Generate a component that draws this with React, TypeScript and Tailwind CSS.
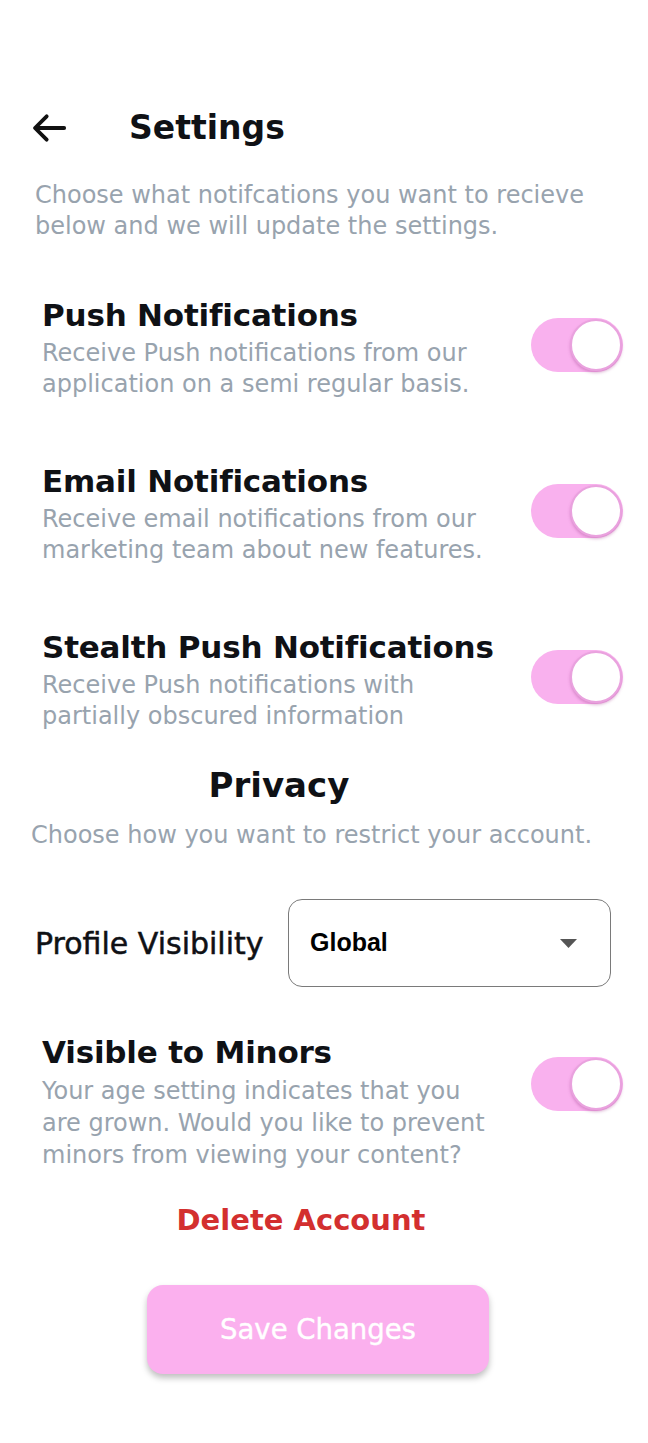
import { useState } from 'react';

const font = { fontFamily: '"DejaVu Sans", Verdana, sans-serif' };

function Toggle({ on, onChange, offset }: { on: boolean; onChange: () => void; offset: string }) {
  return (
    <button
      onClick={onChange}
      className={`flex h-[54px] w-[92px] shrink-0 items-center rounded-full p-[1px] ${offset} ${on ? 'justify-end bg-[#f9b1ee]' : 'justify-start bg-[#e5e7eb]'}`}
    >
      <span className="h-[52px] w-[52px] rounded-full border-2 border-[#e9a2de] bg-white shadow-[0_2px_3px_rgba(160,60,140,0.35)]" />
    </button>
  );
}

function SettingRow({
  title,
  desc,
  on,
  onChange,
  lh = 'leading-[31px]',
  offset = 'mt-[22px]',
}: {
  title: string;
  desc: string;
  on: boolean;
  onChange: () => void;
  lh?: string;
  offset?: string;
}) {
  return (
    <div className="flex items-start justify-between pl-[42px] pr-[25px]">
      <div className="w-[456px]">
        <h3 className="whitespace-nowrap text-[31px] leading-[38px] font-bold tracking-[-0.2px] text-[#0f1115]">{title}</h3>
        <p className={`mt-[4px] text-[24px] text-[#98a3ae] ${lh}`}>{desc}</p>
      </div>
      <Toggle on={on} onChange={onChange} offset={offset} />
    </div>
  );
}

export default function App() {
  const [push, setPush] = useState(true);
  const [email, setEmail] = useState(true);
  const [stealth, setStealth] = useState(true);
  const [minors, setMinors] = useState(true);

  return (
    <div className="min-h-[1443px] w-[648px] bg-white pt-[105px] pb-[68px]" style={font}>
      <div className="flex h-[46px] items-center pl-[30px]">
        <svg width="40" height="40" viewBox="0 0 24 24" fill="none" stroke="#111" strokeWidth="2.3" strokeLinecap="round" strokeLinejoin="round">
          <path d="M20.5 12H4" />
          <path d="M10 5l-7 7 7 7" />
        </svg>
        <h1 className="ml-[59px] text-[33px] font-bold text-[#0f1115]">Settings</h1>
      </div>

      <p className="mt-[29px] px-[35px] text-[24px] leading-[31px] text-[#98a3ae]">
        Choose what notifcations you want to recieve below and we will update the settings.
      </p>

      <div className="mt-[54px] flex flex-col gap-[62px]">
        <SettingRow
          title="Push Notifications"
          desc="Receive Push notifications from our application on a semi regular basis."
          on={push}
          onChange={() => setPush(!push)}
        />
        <SettingRow
          title="Email Notifications"
          desc="Receive email notifications from our marketing team about new features."
          on={email}
          onChange={() => setEmail(!email)}
        />
        <SettingRow
          title="Stealth Push Notifications"
          desc="Receive Push notifications with partially obscured information"
          on={stealth}
          onChange={() => setStealth(!stealth)}
        />
      </div>

      <h2 className="mt-[31px] pr-[90px] text-center text-[34px] leading-[44px] font-bold text-[#0f1115]">Privacy</h2>
      <p className="mt-[13px] pl-[31px] text-[24px] leading-[31px] text-[#98a3ae]">
        Choose how you want to restrict your account.
      </p>

      <div className="mt-[48px] flex items-center pl-[35px]">
        <span className="w-[253px] text-[30px] text-[#0f1115] [-webkit-text-stroke:0.5px_#0f1115]">Profile Visibility</span>
        <div className="flex h-[88px] w-[323px] items-center justify-between rounded-[14px] border border-[#7a7a7a] pl-[21px] pr-[33px]">
          <span className="text-[25px] font-bold text-black" style={{ fontFamily: '"Liberation Sans", Arial, sans-serif' }}>Global</span>
          <svg width="17" height="9" viewBox="0 0 17 9">
            <path d="M0 0h17L8.5 9z" fill="#555" />
          </svg>
        </div>
      </div>

      <div className="mt-[46px]">
        <SettingRow
          title="Visible to Minors"
          desc="Your age setting indicates that you are grown. Would you like to prevent minors from viewing your content?"
          on={minors}
          onChange={() => setMinors(!minors)}
          lh="leading-[32px]"
          offset="mt-[24px]"
        />
      </div>

      <p className="mt-[31px] pr-[46px] text-center text-[29px] leading-[36px] font-bold text-[#d32f2f]">Delete Account</p>

      <div className="mt-[47px] flex pl-[147px]">
        <button className="h-[89px] w-[342px] rounded-[16px] bg-[#fbb0ee] text-[27.5px] text-white shadow-[0_4px_6px_rgba(0,0,0,0.25)] [-webkit-text-stroke:0.4px_#ffffff]">
          Save Changes
        </button>
      </div>
    </div>
  );
}
